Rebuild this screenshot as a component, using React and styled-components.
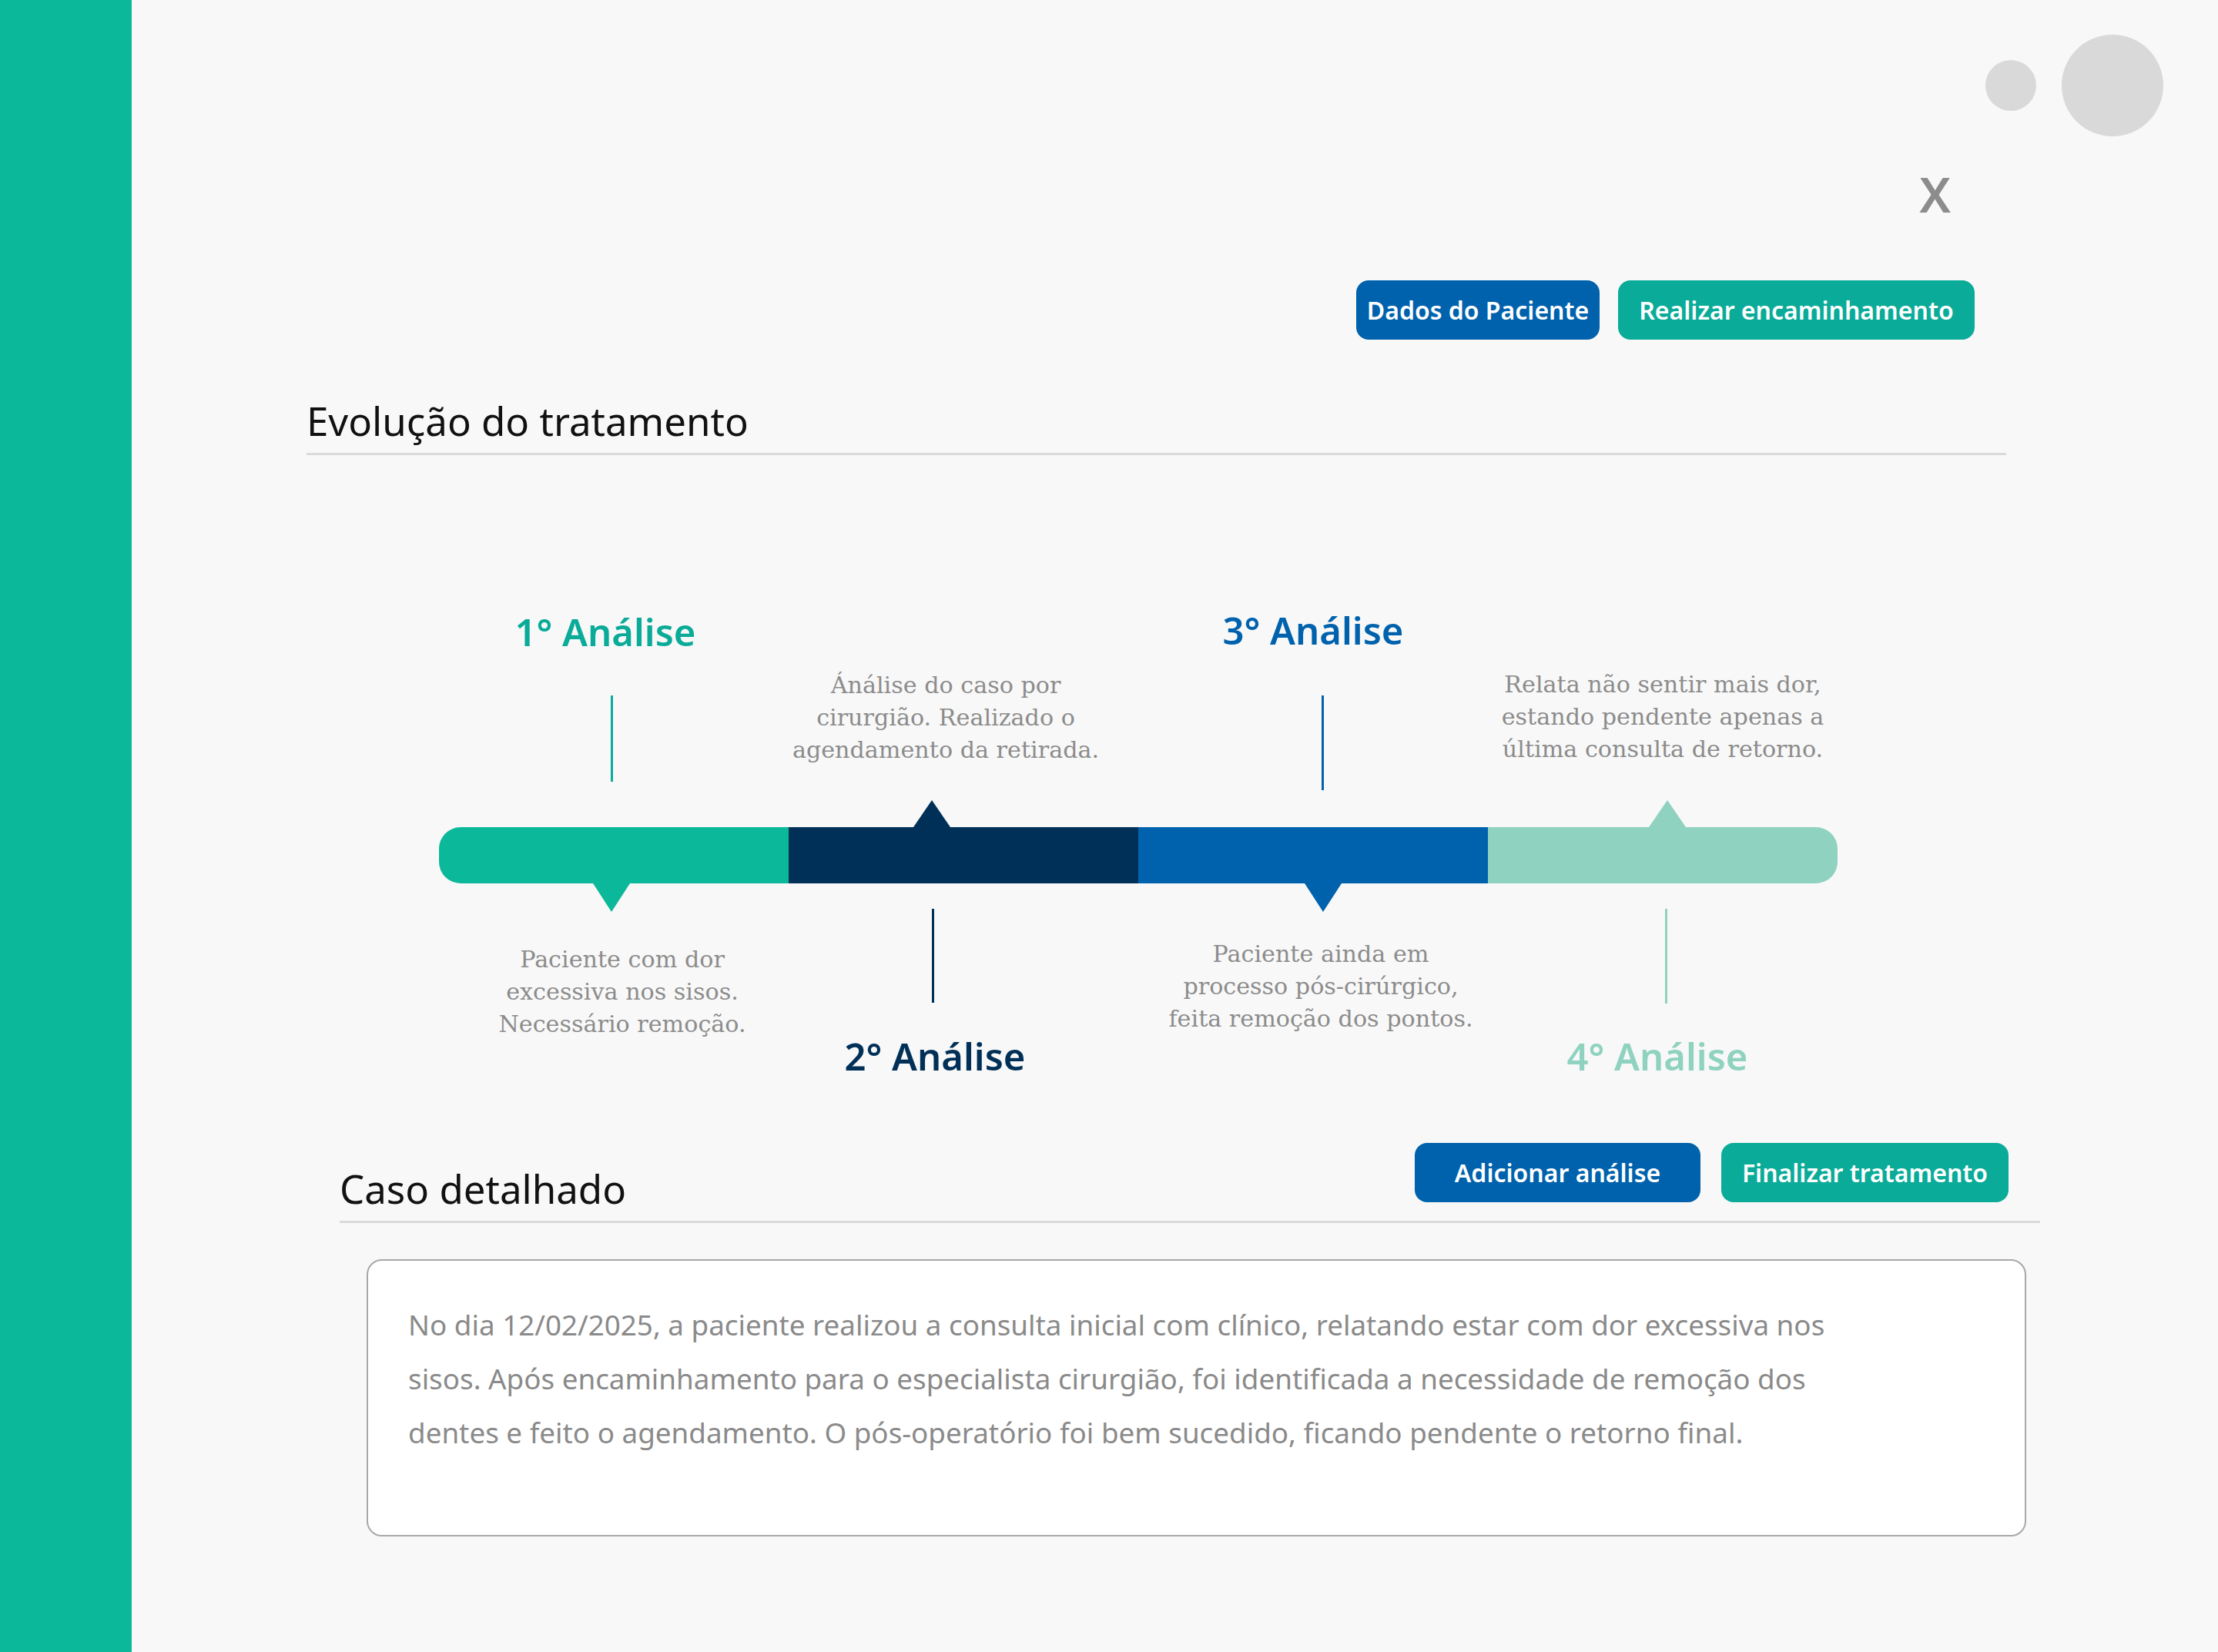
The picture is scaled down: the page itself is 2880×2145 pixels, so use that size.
import React from 'react';
import styled, { createGlobalStyle } from 'styled-components';

const GlobalStyle = createGlobalStyle`
  html, body {
    margin: 0;
    padding: 0;
    background: #f8f8f8;
  }
  * {
    box-sizing: border-box;
  }
`;

const COL = 454;

// centre a block of the column on a given x (from the column's left edge)
const shift = (at) => {
  const d = 2 * at - COL;
  return d > 0 ? `padding-left: ${d}px;` : `padding-right: ${-d}px;`;
};

const App = () => {
  return (
    <>
      <GlobalStyle />
      <Page>
        <Sidebar />
        <Main>
          <TopBar>
            <Dot $size={66} />
            <Dot $size={132} />
          </TopBar>
          <CloseRow>
            <CloseButton>X</CloseButton>
          </CloseRow>
          <ActionRow>
            <Button $bg="#0062ad" $w={316}>Dados do Paciente</Button>
            <Button $bg="#0aab99" $w={463}>Realizar encaminhamento</Button>
          </ActionRow>

          <SectionHeader $left={227} $width={2207}>
            <SectionTitle>Evolução do tratamento</SectionTitle>
          </SectionHeader>

          <Timeline>
            <TopCell>
              <StepLabel $c="#0aab98" $at={216}>1° Análise</StepLabel>
              <Stem $c="#0aab98" $at={224} $h={112} $mt={58} $mb={59} />
            </TopCell>
            <TopCell>
              <Note $at={204} $mb={79}>
                Ánálise do caso por
                <br />
                cirurgião. Realizado o
                <br />
                agendamento da retirada.
              </Note>
            </TopCell>
            <TopCell>
              <StepLabel $c="#0062ad" $at={227}>3° Análise</StepLabel>
              <Stem $c="#0062ad" $at={239} $h={123} $mt={60} $mb={48} />
            </TopCell>
            <TopCell>
              <Note $at={227} $mb={80}>
                Relata não sentir mais dor,
                <br />
                estando pendente apenas a
                <br />
                última consulta de retorno.
              </Note>
            </TopCell>

            <Segment $bg="#0cb89a" $notch="down" $at={224} $round="left" />
            <Segment $bg="#003057" $notch="up" $at={186} />
            <Segment $bg="#0062ad" $notch="down" $at={240} />
            <Segment $bg="#8ed2bf" $notch="up" $at={233} $round="right" />

            <BottomCell>
              <Note $at={238} $mt={78}>
                Paciente com dor
                <br />
                excessiva nos sisos.
                <br />
                Necessário remoção.
              </Note>
            </BottomCell>
            <BottomCell>
              <Stem $c="#003057" $at={187} $h={122} $mt={33} />
              <StepLabel $c="#003057" $at={190} $mt={45}>2° Análise</StepLabel>
            </BottomCell>
            <BottomCell>
              <Note $at={237} $mt={71}>
                Paciente ainda em
                <br />
                processo pós-cirúrgico,
                <br />
                feita remoção dos pontos.
              </Note>
            </BottomCell>
            <BottomCell>
              <Stem $c="#8ed2bf" $at={231} $h={123} $mt={33} />
              <StepLabel $c="#8ed2bf" $at={220} $mt={44}>4° Análise</StepLabel>
            </BottomCell>
          </Timeline>

          <SectionHeader $left={270} $width={2208} $mt={88}>
            <SectionTitle>Caso detalhado</SectionTitle>
            <ButtonGroup>
              <Button $bg="#0062ad" $w={371}>Adicionar análise</Button>
              <Button $bg="#0aab99" $w={373}>Finalizar tratamento</Button>
            </ButtonGroup>
          </SectionHeader>

          <CaseCard>
            No dia 12/02/2025, a paciente realizou a consulta inicial com clínico, relatando estar com dor excessiva nos
            <br />
            sisos. Após encaminhamento para o especialista cirurgião, foi identificada a necessidade de remoção dos
            <br />
            dentes e feito o agendamento. O pós-operatório foi bem sucedido, ficando pendente o retorno final.
          </CaseCard>
        </Main>
      </Page>
    </>
  );
};

export default App;

const Page = styled.div`
  display: flex;
  min-height: 2145px;
  background: #f8f8f8;
  font-family: 'Noto Sans', 'Open Sans', sans-serif;
`;

const Sidebar = styled.aside`
  width: 171px;
  flex-shrink: 0;
  background: #0cb89a;
`;

const Main = styled.main`
  flex: 1;
  display: flex;
  flex-direction: column;
  padding-bottom: 140px;
`;

const TopBar = styled.div`
  display: flex;
  justify-content: flex-end;
  align-items: center;
  gap: 33px;
  padding: 45px 71px 0 0;
`;

const Dot = styled.div`
  width: ${(p) => p.$size}px;
  height: ${(p) => p.$size}px;
  border-radius: 50%;
  background: #d9d9d9;
`;

const CloseRow = styled.div`
  display: flex;
  justify-content: flex-end;
  padding-right: 347px;
  margin-top: 43px;
`;

const CloseButton = styled.button`
  border: none;
  background: none;
  padding: 0;
  font-family: 'Noto Sans', sans-serif;
  font-size: 64px;
  font-weight: 600;
  line-height: 1;
  color: #8c8c8c;
  cursor: pointer;
`;

const ActionRow = styled.div`
  display: flex;
  justify-content: flex-end;
  gap: 24px;
  padding-right: 316px;
  margin-top: 80px;
`;

const Button = styled.button`
  width: ${(p) => p.$w}px;
  height: 77px;
  border: none;
  border-radius: 16px;
  background: ${(p) => p.$bg};
  color: #ffffff;
  font-family: 'Noto Sans', sans-serif;
  font-size: 32px;
  font-weight: 600;
  white-space: nowrap;
  padding: 0;
  cursor: pointer;
`;

const ButtonGroup = styled.div`
  display: flex;
  gap: 27px;
  margin: 0 41px 13px 0;
`;

const SectionHeader = styled.div`
  display: flex;
  justify-content: space-between;
  align-items: flex-end;
  margin-left: ${(p) => p.$left}px;
  width: ${(p) => p.$width}px;
  margin-top: ${(p) => p.$mt ?? 75}px;
  padding-bottom: 11px;
  border-bottom: 3px solid #dadada;
`;

const SectionTitle = styled.h2`
  margin: 0;
  font-size: 51px;
  font-weight: 400;
  line-height: 1.2;
  color: #111111;
`;

const Timeline = styled.div`
  display: grid;
  grid-template-columns: repeat(4, ${COL}px);
  grid-template-rows: auto 73px auto;
  margin-left: 399px;
  margin-top: 203px;
`;

const TopCell = styled.div`
  display: flex;
  flex-direction: column;
  justify-content: flex-end;
`;

const BottomCell = styled.div`
  display: flex;
  flex-direction: column;
  justify-content: flex-start;
`;

const StepLabel = styled.div`
  ${(p) => shift(p.$at)}
  margin-top: ${(p) => p.$mt ?? 0}px;
  text-align: center;
  white-space: nowrap;
  font-size: 49px;
  font-weight: 600;
  line-height: 1;
  color: ${(p) => p.$c};
`;

const Stem = styled.div`
  width: 3px;
  height: ${(p) => p.$h}px;
  margin-left: ${(p) => p.$at - 1}px;
  margin-top: ${(p) => p.$mt ?? 0}px;
  margin-bottom: ${(p) => p.$mb ?? 0}px;
  background: ${(p) => p.$c};
`;

const Note = styled.p`
  ${(p) => shift(p.$at)}
  margin: ${(p) => p.$mt ?? 0}px 0 ${(p) => p.$mb ?? 0}px;
  text-align: center;
  white-space: nowrap;
  font-family: 'DejaVu Serif', 'Liberation Serif', serif;
  font-size: 30.2px;
  font-weight: 300;
  line-height: 42px;
  color: #8c8c8c;
`;

const Segment = styled.div`
  position: relative;
  background: ${(p) => p.$bg};
  border-radius: ${(p) =>
    p.$round === 'left' ? '28px 0 0 28px' : p.$round === 'right' ? '0 28px 28px 0' : '0'};

  &::after {
    content: '';
    position: absolute;
    left: ${(p) => p.$at - 24}px;
    ${(p) => (p.$notch === 'down' ? 'top: 100%;' : 'bottom: 100%;')}
    border-left: 24px solid transparent;
    border-right: 24px solid transparent;
    ${(p) =>
      p.$notch === 'down'
        ? `border-top: 37px solid ${p.$bg};`
        : `border-bottom: 35px solid ${p.$bg};`}
  }
`;

const CaseCard = styled.div`
  margin: 47px 0 0 305px;
  width: 2155px;
  height: 360px;
  padding: 48px 52px;
  background: #ffffff;
  border: 2px solid #a8a8a8;
  border-radius: 20px;
  font-size: 36.8px;
  line-height: 70px;
  color: #8a8a8a;
  white-space: nowrap;
`;
